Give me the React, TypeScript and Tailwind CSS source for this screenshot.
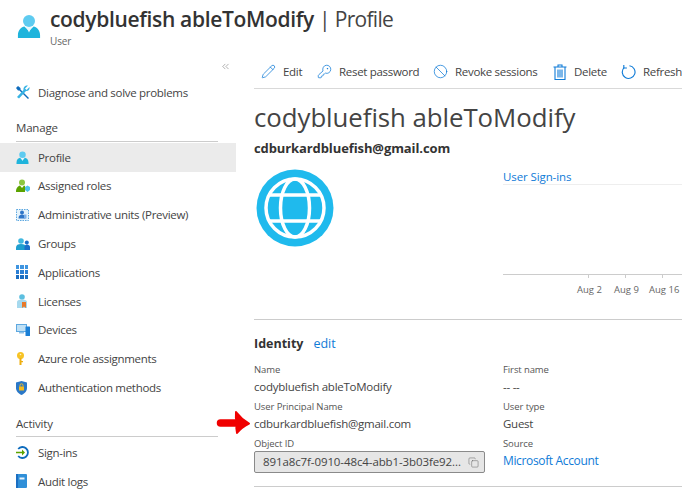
import { ReactNode } from "react";
import { ChevronsLeft, Copy, KeyRound, Pencil, Ban } from "lucide-react";

function UserIcon({ size = 16 }: { size?: number }) {
  return (
    <svg width={size} height={size} viewBox="0 0 24 26">
      <circle cx="12" cy="7.5" r="6.5" fill="#5ecbf0" />
      <path d="M0 26v-3c0-6 4-9 7-9.5l5 5 5-5c3 .5 7 3.5 7 9.5v3z" fill="#1fb4dc" />
      <path d="M9 14h6l-3 6z" fill="#e8f8fd" />
    </svg>
  );
}

function Wrench() {
  return (
    <svg width="14" height="14" viewBox="0 0 14 14">
      <path d="M2 1l2.500 2 0 1.500L13 13l-1 1-8.500-8.500H2L0 3z" fill="#0f6cbd" />
      <path d="M12 .5L9 3.500l1.500 1.500 3-3c.5 2-1 4.500-3.500 4L3 13.500 1 12l6.500-7C7 2 9.500 0 12 .5z" fill="#39b4e4" />
    </svg>
  );
}

function RolesIcon() {
  return (
    <svg width="14" height="14" viewBox="0 0 14 14">
      <circle cx="6" cy="3.500" r="3" fill="#8cc63f" />
      <path d="M0 13c0-4 2-6 4-6.500L6 9l2-2.500 1 .5v6z" fill="#5ba300" />
      <path d="M9 8l2.500-1.500L14 8v3l-2.500 2L9 11z" fill="#4fc3e8" />
    </svg>
  );
}

function UnitsIcon() {
  return (
    <svg width="14" height="14" viewBox="0 0 14 14">
      <rect x=".5" y="1.500" width="12" height="11" fill="#e6f3fb" stroke="#5ea8e0" strokeDasharray="1.500 1" />
      <circle cx="6" cy="4.500" r="2" fill="#2f76c8" />
      <path d="M2.500 10.500c0-3 1.500-4 3.500-4s3.500 1 3.500 4z" fill="#2f76c8" />
      <path d="M8 6.500h2.500v4H8z" fill="#7fb0e8" />
    </svg>
  );
}

function GroupsIcon() {
  return (
    <svg width="14" height="12" viewBox="0 0 14 12">
      <circle cx="5" cy="3" r="2.800" fill="#41b8e0" />
      <path d="M0 12V9.500C0 7 2 6 5 6s5 1 5 3.500V12z" fill="#1f9fcf" />
      <circle cx="10.800" cy="4.500" r="2" fill="#1a6fc9" />
      <path d="M8.500 12V9c0-1.500 1-2.500 2.500-2.500S14 7.500 14 9v3z" fill="#1a6fc9" />
    </svg>
  );
}

function AppsIcon() {
  const cells = [0, 1, 2, 3, 4, 5, 6, 7, 8];
  return (
    <div className="grid grid-cols-3 gap-px w-3 h-3.5 shrink-0">
      {cells.map((c) => (
        <div key={c} className={c < 3 ? "bg-[#3f95e0]" : c < 6 ? "bg-[#2a7fd4]" : "bg-[#1b6ec2]"} />
      ))}
    </div>
  );
}

function LicensesIcon() {
  return (
    <svg width="12" height="14" viewBox="0 0 12 14">
      <circle cx="6" cy="3" r="2.800" fill="#5cbfe0" />
      <path d="M1 14V8c0-1.500 1.500-2.500 5-2.500S11 6.500 11 8v6z" fill="#a6d9ee" />
      <path d="M6 8h4v6l-2-1.500L6 14z" fill="#e8792b" />
    </svg>
  );
}

function DevicesIcon() {
  return (
    <svg width="14" height="12" viewBox="0 0 14 12">
      <rect x="0" y="0" width="11" height="8" fill="#5ea8e0" />
      <rect x="1" y="1" width="9" height="6" fill="#bfe0f5" />
      <rect x="3" y="8" width="5" height="1.500" fill="#8fc1e8" />
      <rect x="9.500" y="2.500" width="4.500" height="9.500" rx=".5" fill="#1b7fd6" />
    </svg>
  );
}

function KeyIcon() {
  return (
    <svg width="9" height="13" viewBox="0 0 9 13">
      <circle cx="4.500" cy="3.500" r="3.500" fill="#f7c325" />
      <path d="M3.500 6h2v7h-2z" fill="#eeae10" />
      <path d="M5 9h2v1.200H5z" fill="#eeae10" />
      <circle cx="4.500" cy="2.500" r=".8" fill="#fff3c4" />
    </svg>
  );
}

function ShieldIcon() {
  return (
    <svg width="11" height="14" viewBox="0 0 11 14">
      <path d="M5.500 0L11 1.500V7c0 3.500-2.500 5.500-5.500 7C2.500 12.500 0 10.500 0 7V1.500z" fill="#2a78c8" />
      <rect x="3" y="5.500" width="5" height="4" fill="#f4bb1f" />
      <path d="M4 5.500V4.300a1.500 1.500 0 013 0v1.200" fill="none" stroke="#f4bb1f" />
    </svg>
  );
}

function SignInsIcon() {
  return (
    <svg width="13" height="13" viewBox="0 0 13 13">
      <path d="M2.200 3a5.500 5.500 0 110 7" fill="none" stroke="#0f6cbd" strokeWidth="1.800" />
      <path d="M0 5.700h6V3.500l3 3-3 3V7.300H0z" fill="#5ba300" />
    </svg>
  );
}

function AuditIcon() {
  return (
    <svg width="11" height="14" viewBox="0 0 11 14">
      <rect width="11" height="14" rx="1" fill="#2f8fd8" />
      <rect x="0" y="0" width="2" height="14" fill="#1b6ec2" />
      <rect x="3.500" y="3.500" width="5" height="2" fill="#e8f4fc" />
    </svg>
  );
}

function TrashIcon() {
  return (
    <svg width="14" height="16" viewBox="0 0 14 16" fill="none" stroke="#0f7bd7" strokeWidth="1.100">
      <path d="M.5 3h13M5 3V1h4v2M2 3v12.500h10V3M5 5.500v8M7 5.500v8M9 5.500v8" />
    </svg>
  );
}

function RefreshIcon() {
  return (
    <svg width="16" height="16" viewBox="0 0 16 16" fill="none" stroke="#0f7bd7" strokeWidth="1.200">
      <path d="M9 1.300A6.800 6.800 0 113.300 3.300" />
      <path d="M3 .5V3.700h3.300" />
    </svg>
  );
}

function GlobeAvatar() {
  return (
    <svg width="78" height="78" viewBox="0 0 78 78" className="ml-[2px]">
      <circle cx="39" cy="39" r="38.500" fill="#1fbaed" />
      <circle cx="39" cy="39" r="29" fill="#1fbaed" stroke="#fff" strokeWidth="3.500" />
      <ellipse cx="39" cy="39" rx="14.500" ry="29" fill="none" stroke="#fff" strokeWidth="3.500" />
      <path d="M12 26h54M12 52h54" stroke="#fff" strokeWidth="3.500" />
    </svg>
  );
}

function NavRow({ icon, label, active }: { icon: ReactNode; label: string; active?: boolean }) {
  return (
    <div className={`flex items-center h-[28.8px] pl-4 text-[11.5px] tracking-[-0.3px] text-[#444] ${active ? "bg-[#ebebeb]" : ""}`}>
      <span className="w-[22px] flex items-center shrink-0">{icon}</span>
      {label}
    </div>
  );
}

function ToolButton({ icon, label, width }: { icon: ReactNode; label: string; width: string }) {
  return (
    <div className={`flex items-center gap-[7px] shrink-0 ${width} text-[11.5px] tracking-[-0.3px] text-[#444]`}>
      {icon}
      <span>{label}</span>
    </div>
  );
}

function Field({ label, value, link }: { label: string; value: string; link?: boolean }) {
  return (
    <div className="h-[37px]">
      <div className="text-[9.5px] leading-[15px] tracking-[-0.1px] text-[#555]">{label}</div>
      <div className={`leading-[20px] ${link ? "text-[12px] tracking-[-0.35px] text-[#0f7bd7]" : "text-[11.5px] tracking-[-0.25px] text-[#444]"}`}>{value}</div>
    </div>
  );
}

export default function App() {
  return (
    <div className="w-[682px] h-[495px] overflow-hidden bg-white font-['Open_Sans',sans-serif] relative">
      <div className="flex items-start h-[52px] pl-[17px] pt-[14px]">
        <UserIcon size={24} />
        <div className="ml-[9px] -mt-[11px]">
          <div className="text-[21px] leading-[32px] font-semibold text-[#333] whitespace-nowrap tracking-[-0.33px]">
            codybluefish ableToModify <span className="font-normal text-[#444] tracking-[-0.7px]">| Profile</span>
          </div>
          <div className="text-[10px] leading-[12px] tracking-[-0.1px] text-[#666]">User</div>
        </div>
      </div>

      <div className="flex">
        <div className="w-[236px] shrink-0">
          <div className="flex justify-end pr-[5px] h-[26px] pt-[9px]">
            <ChevronsLeft size={11} strokeWidth={1} className="text-[#555]" />
          </div>
          <NavRow icon={<Wrench />} label="Diagnose and solve problems" />
          <div className="mx-4 mt-[8px] h-[27px] pt-[3px] text-[11.5px] tracking-[-0.2px] leading-[20px] text-[#444] border-b border-[#ccc] mr-[18px]">Manage</div>
          <div className="mt-[1px]">
            <NavRow active icon={<UserIcon size={13} />} label="Profile" />
            <NavRow icon={<RolesIcon />} label="Assigned roles" />
            <NavRow icon={<UnitsIcon />} label="Administrative units (Preview)" />
            <NavRow icon={<GroupsIcon />} label="Groups" />
            <NavRow icon={<AppsIcon />} label="Applications" />
            <NavRow icon={<LicensesIcon />} label="Licenses" />
            <NavRow icon={<DevicesIcon />} label="Devices" />
            <NavRow icon={<KeyIcon />} label="Azure role assignments" />
            <NavRow icon={<ShieldIcon />} label="Authentication methods" />
          </div>
          <div className="mx-4 mt-[9px] h-[26px] pt-[3px] text-[11.5px] tracking-[-0.2px] leading-[20px] text-[#444] border-b border-[#ccc] mr-[18px]">Activity</div>
          <div className="mt-[1px]">
            <NavRow icon={<SignInsIcon />} label="Sign-ins" />
            <NavRow icon={<AuditIcon />} label="Audit logs" />
          </div>
        </div>

        <div className="flex-1 min-w-0 pl-[18px]">
          <div className="flex items-center h-[37px] pt-[3px] pl-[7px] border-b border-[#d9d9d9] whitespace-nowrap">
            <ToolButton width="w-[56px]" icon={<Pencil size={15} strokeWidth={1.200} className="text-[#0f7bd7]" />} label="Edit" />
            <ToolButton width="w-[116px]" icon={<KeyRound size={15} strokeWidth={1.200} className="text-[#0f7bd7]" />} label="Reset password" />
            <ToolButton width="w-[120px]" icon={<Ban size={15} strokeWidth={1.200} className="text-[#0f7bd7]" />} label="Revoke sessions" />
            <ToolButton width="w-[68px]" icon={<TrashIcon />} label="Delete" />
            <ToolButton width="w-[61px]" icon={<RefreshIcon />} label="Refresh" />
          </div>

          <h1 className="mt-[9px] text-[25.8px] leading-[38px] text-[#444] whitespace-nowrap tracking-[-0.05px]">codybluefish ableToModify</h1>
          <div className="mt-[2px] text-[13px] leading-[20px] font-bold tracking-[-0.1px] text-[#333]">cdburkardbluefish@gmail.com</div>

          <div className="flex h-[151px] border-b border-[#ccc] mt-[11px]">
            <div className="w-[249px] shrink-0">
              <GlobeAvatar />
            </div>
            <div className="flex-1 min-w-0">
              <div className="text-[11.5px] tracking-[-0.1px] leading-[15px] h-[16px] border-b border-[#eee] text-[#0f7bd7]">User Sign-ins</div>
              <div className="h-[90px] border-b border-[#ccc]" />
              <div className="relative h-[30px] text-[9.5px] text-[#666]">
                <span className="absolute left-[85px] top-0 w-px h-[3px] bg-[#ccc]" />
                <span className="absolute left-[122px] top-0 w-px h-[3px] bg-[#ccc]" />
                <span className="absolute left-[159px] top-0 w-px h-[3px] bg-[#ccc]" />
                <span className="absolute left-[74px] top-[8px]">Aug 2</span>
                <span className="absolute left-[111px] top-[8px]">Aug 9</span>
                <span className="absolute left-[146px] top-[8px]">Aug 16</span>
              </div>
            </div>
          </div>

          <div className="flex items-baseline gap-[10px] mt-[14px] h-[22px] text-[12.500px] leading-[20px]">
            <span className="font-bold text-[#333]">Identity</span>
            <span className="text-[#0f7bd7]">edit</span>
          </div>
          <div className="grid grid-cols-[249px_1fr] mt-[6px] border-b border-[#ccc] h-[125px]">
            <div>
              <Field label="Name" value="codybluefish ableToModify" />
              <Field label="User Principal Name" value="cdburkardbluefish@gmail.com" />
              <div className="text-[9.5px] leading-[15px] tracking-[-0.1px] text-[#555]">Object ID</div>
              <div className="flex items-center justify-between w-[231px] h-[22px] pl-2 pr-[5px] bg-[#e6e6e6] border border-[#8a8a8a] rounded-[2px] text-[11.5px] tracking-[-0.1px] text-[#444] whitespace-nowrap">
                <span>891a8c7f-0910-48c4-abb1-3b03fe92...</span>
                <Copy size={11} strokeWidth={1} className="text-[#555] shrink-0" />
              </div>
            </div>
            <div>
              <Field label="First name" value="-- --" />
              <Field label="User type" value="Guest" />
              <Field label="Source" value="Microsoft Account" link />
            </div>
          </div>
        </div>
      </div>

      <svg width="36" height="26" viewBox="0 0 36 26" className="absolute left-[216px] top-[409px]">
        <path d="M4.500 14H22" stroke="#f00000" strokeWidth="7.500" strokeLinecap="round" />
        <path d="M20 3c3 4 7 8 13 11.500-5 2.500-9 5.500-12 9.500-1-3-1-6 0-9.500C20 11 19.500 7 20 3z" fill="#f00000" stroke="#f00000" strokeLinejoin="round" strokeWidth="2" />
      </svg>
    </div>
  );
}
